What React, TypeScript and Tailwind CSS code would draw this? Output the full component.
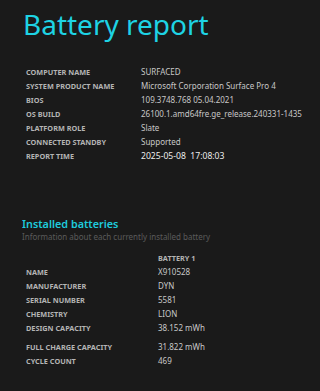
export default function App() {
  const info: [string, string][] = [
    ["COMPUTER NAME", "SURFACED"],
    ["SYSTEM PRODUCT NAME", "Microsoft Corporation Surface Pro 4"],
    ["BIOS", "109.3748.768 05.04.2021"],
    ["OS BUILD", "26100.1.amd64fre.ge_release.240331-1435"],
    ["PLATFORM ROLE", "Slate"],
    ["CONNECTED STANDBY", "Supported"],
  ];
  const bat: [string, string][] = [
    ["NAME", "X910528"],
    ["MANUFACTURER", "DYN"],
    ["SERIAL NUMBER", "5581"],
    ["CHEMISTRY", "LION"],
    ["DESIGN CAPACITY", "38.152 mWh"],
  ];
  return (
    <div className="w-[320px] h-[391px] bg-[#1a1a1a] overflow-hidden font-['Noto_Sans',sans-serif]">
      <h1 className="pl-[23px] pt-[5px] text-[28px] leading-[38px] font-normal text-[#1ed3e4]">Battery report</h1>

      <div className="mt-[22px] pl-[26px]">
        {info.map(([k, v]) => (
          <div key={k} className="flex h-[14px] items-center">
            <div className="w-[115px] text-[7.3px] font-bold text-[#b4b4b4]">{k}</div>
            <div className="text-[8px] text-[#c8c8c8]">{v}</div>
          </div>
        ))}
        <div className="flex h-[14px] items-center">
          <div className="w-[115px] text-[7.3px] font-bold text-[#b4b4b4]">REPORT TIME</div>
          <div className="text-[8.6px] text-[#ececec] whitespace-pre">2025-05-08  17:08:03</div>
        </div>
      </div>

      <div className="mt-[54px] pl-[22px]">
        <h2 className="text-[10.8px] leading-[14px] font-semibold text-[#1ecbdc]">Installed batteries</h2>
        <div className="text-[8px] leading-[12px] text-[#5a5a5a]">Information about each currently installed battery</div>
      </div>

      <div className="mt-[8px] pl-[26px]">
        <div className="flex h-[14px] items-center">
          <div className="w-[132px]" />
          <div className="text-[7.3px] font-bold text-[#b4b4b4]">BATTERY 1</div>
        </div>
        {bat.map(([k, v]) => (
          <div key={k} className="flex h-[14px] items-center">
            <div className="w-[132px] text-[7.3px] font-bold text-[#b4b4b4]">{k}</div>
            <div className="text-[8px] text-[#c8c8c8]">{v}</div>
          </div>
        ))}
        <div className="flex h-[14px] items-center mt-[5px]">
          <div className="w-[132px] text-[7.3px] font-bold text-[#b4b4b4]">FULL CHARGE CAPACITY</div>
          <div className="text-[8px] text-[#c8c8c8]">31.822 mWh</div>
        </div>
        <div className="flex h-[14px] items-center">
          <div className="w-[132px] text-[7.3px] font-bold text-[#b4b4b4]">CYCLE COUNT</div>
          <div className="text-[8px] text-[#c8c8c8]">469</div>
        </div>
      </div>
    </div>
  );
}
